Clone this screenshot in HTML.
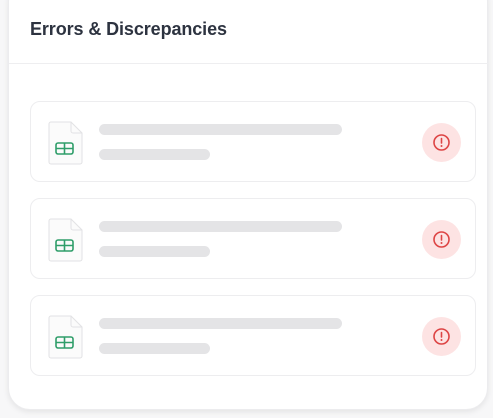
<!DOCTYPE html>
<html><head><style>
*{margin:0;padding:0;box-sizing:border-box}
body{width:493px;height:418px;background:#f7f7f8;overflow:hidden;font-family:"Liberation Sans",sans-serif;position:relative}
.card{position:absolute;left:8px;top:-20px;width:480px;height:430px;background:#fff;border:1px solid #ececee;border-radius:22px;box-shadow:0 2px 6px rgba(0,0,0,.08)}
h1{position:absolute;left:30px;top:19px;font-size:18px;font-weight:700;color:#2d3340;letter-spacing:-.1px}
.div{position:absolute;left:9px;right:5px;top:63px;height:1px;background:#eeeef0}
.row{position:absolute;left:30px;width:446px;height:81px;border:1px solid #ededef;border-radius:10px;background:#fff}
.doc{position:absolute;left:17px;top:19px}
.b1{position:absolute;left:68px;top:22px;width:243px;height:11px;border-radius:6px;background:#e4e4e6}
.b2{position:absolute;left:68px;top:47px;width:111px;height:11px;border-radius:6px;background:#e4e4e6}
.al{position:absolute;left:391px;top:21px;width:39px;height:39px;border-radius:50%;background:#fde3e3}
.al svg{position:absolute;left:10px;top:10px}
</style></head><body>
<div class="card"></div>
<h1>Errors &amp; Discrepancies</h1>
<div class="div"></div>
<div class="row" style="top:101px">
<svg class="doc" width="36" height="44" viewBox="0 0 36 44"><path d="M3 1H23L34 12V41a2 2 0 0 1-2 2H3a2 2 0 0 1-2-2V3a2 2 0 0 1 2-2Z" fill="#fbfbfb" stroke="#e2e2e4"/><path d="M23 1V10a2 2 0 0 0 2 2H34" fill="none" stroke="#e2e2e4"/><rect x="8" y="22" width="17" height="11" rx="2" fill="none" stroke="#2f9e6a" stroke-width="1.6"/><path d="M8 27.5H25M16.5 22V33" stroke="#2f9e6a" stroke-width="1.6"/></svg>
<div class="b1"></div><div class="b2"></div>
<div class="al"><svg width="19" height="19" viewBox="0 0 19 19"><circle cx="9.5" cy="9.5" r="7.5" fill="none" stroke="#d44" stroke-width="1.6"/><path d="M9.5 5.5V10" stroke="#d44" stroke-width="1.6" stroke-linecap="round"/><circle cx="9.5" cy="13" r="1" fill="#d44"/></svg></div>
</div>
<div class="row" style="top:198px">
<svg class="doc" width="36" height="44" viewBox="0 0 36 44"><path d="M3 1H23L34 12V41a2 2 0 0 1-2 2H3a2 2 0 0 1-2-2V3a2 2 0 0 1 2-2Z" fill="#fbfbfb" stroke="#e2e2e4"/><path d="M23 1V10a2 2 0 0 0 2 2H34" fill="none" stroke="#e2e2e4"/><rect x="8" y="22" width="17" height="11" rx="2" fill="none" stroke="#2f9e6a" stroke-width="1.6"/><path d="M8 27.5H25M16.5 22V33" stroke="#2f9e6a" stroke-width="1.6"/></svg>
<div class="b1"></div><div class="b2"></div>
<div class="al"><svg width="19" height="19" viewBox="0 0 19 19"><circle cx="9.5" cy="9.5" r="7.5" fill="none" stroke="#d44" stroke-width="1.6"/><path d="M9.5 5.5V10" stroke="#d44" stroke-width="1.6" stroke-linecap="round"/><circle cx="9.5" cy="13" r="1" fill="#d44"/></svg></div>
</div>
<div class="row" style="top:295px">
<svg class="doc" width="36" height="44" viewBox="0 0 36 44"><path d="M3 1H23L34 12V41a2 2 0 0 1-2 2H3a2 2 0 0 1-2-2V3a2 2 0 0 1 2-2Z" fill="#fbfbfb" stroke="#e2e2e4"/><path d="M23 1V10a2 2 0 0 0 2 2H34" fill="none" stroke="#e2e2e4"/><rect x="8" y="22" width="17" height="11" rx="2" fill="none" stroke="#2f9e6a" stroke-width="1.6"/><path d="M8 27.5H25M16.5 22V33" stroke="#2f9e6a" stroke-width="1.6"/></svg>
<div class="b1"></div><div class="b2"></div>
<div class="al"><svg width="19" height="19" viewBox="0 0 19 19"><circle cx="9.5" cy="9.5" r="7.5" fill="none" stroke="#d44" stroke-width="1.6"/><path d="M9.5 5.5V10" stroke="#d44" stroke-width="1.6" stroke-linecap="round"/><circle cx="9.5" cy="13" r="1" fill="#d44"/></svg></div>
</div>
</body></html>
